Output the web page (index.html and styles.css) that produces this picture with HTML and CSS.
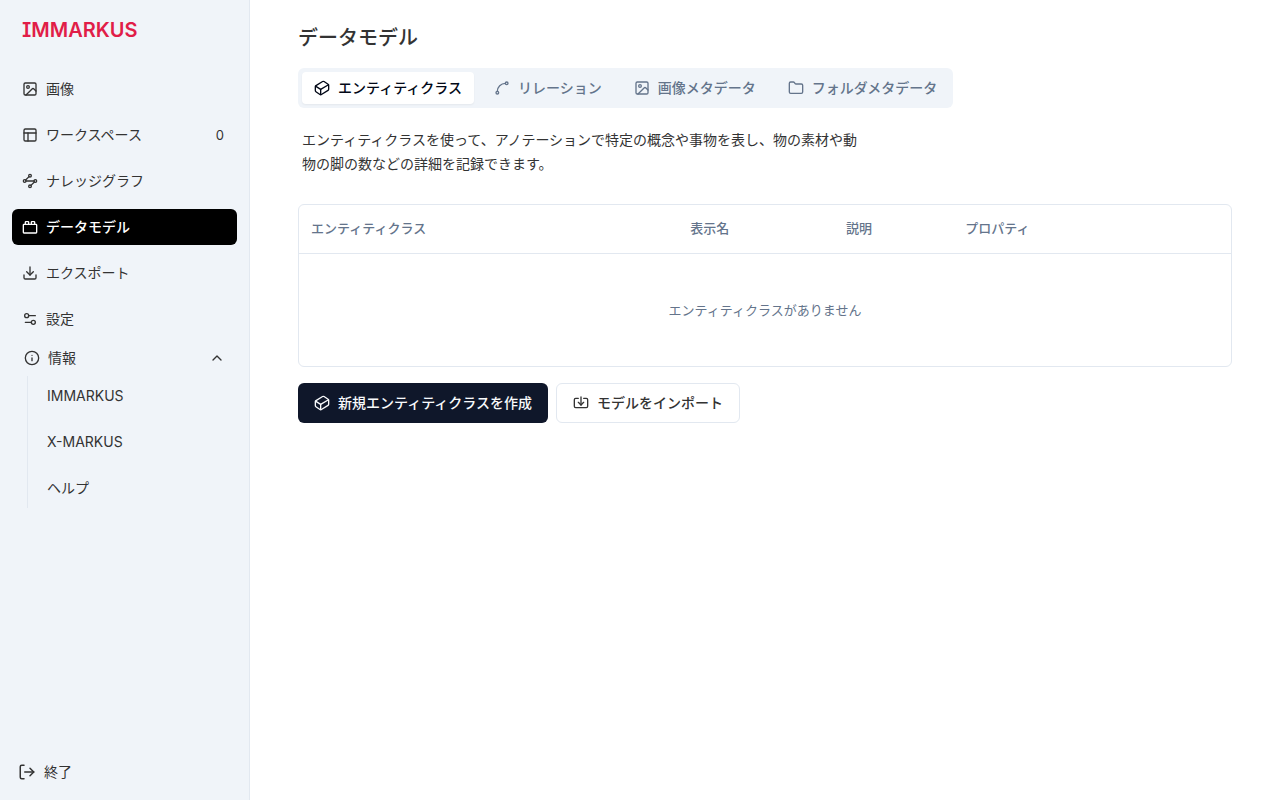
FILE: index.html
```html
<!DOCTYPE html>
<html lang="ja">
<head>
    <meta charset="UTF-8">
    <meta name="viewport" content="width=device-width, initial-scale=1.0">
    <title>IMMARKUS</title>
    <link rel="stylesheet" href="styles.css">
</head>
<body>
    <svg class="sprite" aria-hidden="true">
        <symbol id="image" viewBox="0 0 24 24">
            <rect width="18" height="18" x="3" y="3" rx="2" />
            <circle cx="9" cy="9" r="2" />
            <path d="m21 15-3.086-3.086a2 2 0 0 0-2.828 0L6 21" />
        </symbol>
        <symbol id="cuboid" viewBox="0 0 24 24">
            <path d="m21.12 6.4-6.05-4.06a2 2 0 0 0-2.17-.05L2.95 8.41a2 2 0 0 0-.95 1.7v5.82a2 2 0 0 0 .88 1.66l6.05 4.07a2 2 0 0 0 2.17.05l9.95-6.12a2 2 0 0 0 .95-1.7V8.06a2 2 0 0 0-.88-1.66Z" />
            <path d="M10 22v-8L2.25 9.15" />
            <path d="m10 14 11.77-6.87" />
        </symbol>
    </svg>

    <div class="page">
        <aside class="sidebar">
            <h1 class="logo">IMMARKUS</h1>

            <nav class="nav">
                <a class="nav-item" href="#images">
                    <svg class="icon"><use href="#image" /></svg>
                    画像
                </a>
                <a class="nav-item" href="#workspace">
                    <svg class="icon" viewBox="0 0 24 24">
                        <rect width="18" height="18" x="3" y="3" rx="2" />
                        <path d="M3 9h18" />
                        <path d="M9 21V9" />
                    </svg>
                    ワークスペース
                    <span class="count">0</span>
                </a>
                <a class="nav-item" href="#graph">
                    <svg class="icon" viewBox="0 0 24 24">
                        <circle cx="12" cy="4" r="2" />
                        <path d="m10.600 5.400-5.200 5.200" />
                        <circle cx="4" cy="12" r="2" />
                        <path d="M6 12h12" />
                        <circle cx="20" cy="12" r="2" />
                        <path d="m18.600 13.400-5.200 5.200" />
                        <circle cx="12" cy="20" r="2" />
                    </svg>
                    ナレッジグラフ
                </a>
                <a class="nav-item active" href="#model">
                    <svg class="icon" viewBox="0 0 24 24">
                        <rect width="20" height="13" x="2" y="8" rx="1" />
                        <path d="M10 8V5c0-.6-.4-1-1-1H6a1 1 0 0 0-1 1v3" />
                        <path d="M19 8V5c0-.6-.4-1-1-1h-3a1 1 0 0 0-1 1v3" />
                    </svg>
                    データモデル
                </a>
                <a class="nav-item" href="#export">
                    <svg class="icon" viewBox="0 0 24 24">
                        <path d="M21 15v4a2 2 0 0 1-2 2H5a2 2 0 0 1-2-2v-4" />
                        <path d="m7 10 5 5 5-5" />
                        <path d="M12 15V3" />
                    </svg>
                    エクスポート
                </a>
                <a class="nav-item" href="#settings">
                    <svg class="icon" viewBox="0 0 24 24">
                        <path d="M20 7h-9" />
                        <path d="M14 17H5" />
                        <circle cx="17" cy="17" r="3" />
                        <circle cx="7" cy="7" r="3" />
                    </svg>
                    設定
                </a>
            </nav>

            <button type="button" class="about-toggle" aria-expanded="true">
                <svg class="icon" viewBox="0 0 24 24">
                    <circle cx="12" cy="12" r="10" />
                    <path d="M12 16v-4" />
                    <path d="M12 8h.01" />
                </svg>
                情報
                <svg class="icon chevron" viewBox="0 0 24 24"><path d="m18 15-6-6-6 6" /></svg>
            </button>
            <div class="about">
                <a class="nav-item" href="#immarkus">IMMARKUS</a>
                <a class="nav-item" href="#xmarkus">X-MARKUS</a>
                <a class="nav-item" href="#help">ヘルプ</a>
            </div>

            <button type="button" class="exit">
                <svg class="icon exit-icon" viewBox="0 0 24 24">
                    <path d="M8 21H5a2 2 0 0 1-2-2V5a2 2 0 0 1 2-2h3" />
                    <path d="m16 17 5-5-5-5" />
                    <path d="M21 12H9" />
                </svg>
                終了
            </button>
        </aside>

        <main class="main">
            <h2 class="title">データモデル</h2>

            <div class="tabs" role="tablist">
                <button type="button" class="tab selected" role="tab" aria-selected="true">
                    <svg class="icon"><use href="#cuboid" /></svg>
                    エンティティクラス
                </button>
                <button type="button" class="tab" role="tab">
                    <svg class="icon" viewBox="0 0 24 24">
                        <circle cx="19" cy="5" r="2" />
                        <circle cx="5" cy="19" r="2" />
                        <path d="M5 17A12 12 0 0 1 17 5" />
                    </svg>
                    リレーション
                </button>
                <button type="button" class="tab" role="tab">
                    <svg class="icon"><use href="#image" /></svg>
                    画像メタデータ
                </button>
                <button type="button" class="tab" role="tab">
                    <svg class="icon" viewBox="0 0 24 24">
                        <path d="M20 20a2 2 0 0 0 2-2V8a2 2 0 0 0-2-2h-7.900a2 2 0 0 1-1.690-.900L9.600 3.900A2 2 0 0 0 7.930 3H4a2 2 0 0 0-2 2v13a2 2 0 0 0 2 2Z" />
                    </svg>
                    フォルダメタデータ
                </button>
            </div>

            <p class="intro">エンティティクラスを使って、アノテーションで特定の概念や事物を表し、物の素材や動物の脚の数などの詳細を記録できます。</p>

            <div class="table-box">
                <table class="table">
                    <thead>
                        <tr>
                            <th class="col-class">エンティティクラス</th>
                            <th class="col-name">表示名</th>
                            <th class="col-description">説明</th>
                            <th>プロパティ</th>
                        </tr>
                    </thead>
                    <tbody>
                        <tr>
                            <td class="empty" colspan="4">エンティティクラスがありません</td>
                        </tr>
                    </tbody>
                </table>
            </div>

            <div class="actions">
                <button type="button" class="btn primary">
                    <svg class="icon"><use href="#cuboid" /></svg>
                    新規エンティティクラスを作成
                </button>
                <button type="button" class="btn">
                    <svg class="icon" viewBox="0 0 24 24">
                        <path d="M12 3v12" />
                        <path d="m8 11 4 4 4-4" />
                        <path d="M8 5H4a2 2 0 0 0-2 2v10a2 2 0 0 0 2 2h16a2 2 0 0 0 2-2V7a2 2 0 0 0-2-2h-4" />
                    </svg>
                    モデルをインポート
                </button>
            </div>
        </main>
    </div>
</body>
</html>
```

FILE: styles.css
```css
* {
    box-sizing: border-box;
}
body {
    margin: 0;
    font-family: Inter, "Noto Sans CJK JP", sans-serif;
    font-size: 14px;
    line-height: 20px;
    color: #333;
    background-color: #fff;
}
button {
    font: inherit;
    color: inherit;
    background: none;
    border: none;
    cursor: pointer;
}
a {
    color: inherit;
    text-decoration: none;
}
.sprite {
    display: none;
}
.icon {
    width: 16px;
    height: 16px;
    flex: none;
    fill: none;
    stroke: currentColor;
    stroke-width: 2;
    stroke-linecap: round;
    stroke-linejoin: round;
}
.page {
    display: flex;
    min-height: 100vh;
}

/* sidebar */
.sidebar {
    display: flex;
    flex-direction: column;
    width: 250px;
    flex: none;
    padding: 16px 12px 10px;
    background-color: #f0f4f9;
    border-right: 1px solid #e2e8f0;
}
.logo {
    margin: 0 0 27px;
    padding: 0 10px;
    font-size: 20px;
    line-height: 28px;
    font-weight: 600;
    font-feature-settings: "cv08";
    color: #e11d48;
}
.nav {
    display: flex;
    flex-direction: column;
    gap: 10px;
}
.nav-item {
    display: flex;
    align-items: center;
    gap: 8px;
    height: 36px;
    padding: 0 10px;
    border-radius: 6px;
}
.active {
    background-color: #000;
    color: #fff;
    font-weight: 500;
}
.count {
    margin-left: auto;
    padding-right: 3px;
    font-size: 13px;
}
.about-toggle {
    display: flex;
    align-items: center;
    gap: 8px;
    height: 36px;
    margin-top: 3px;
    padding: 0 12px;
}
.chevron {
    margin-left: auto;
}
.about {
    display: flex;
    flex-direction: column;
    gap: 10px;
    margin-left: 15px;
    padding: 2px 0 2px 9px;
    border-left: 1px solid #e2e8f0;
}
.exit {
    display: flex;
    align-items: center;
    gap: 8px;
    height: 36px;
    margin-top: auto;
    padding: 0 6px;
}
.exit-icon {
    width: 18px;
    height: 18px;
}

/* data model */
.main {
    flex: 1;
    min-width: 0;
    padding: 24px 48px;
}
.title {
    margin: 0 0 16px;
    font-size: 20px;
    line-height: 28px;
    font-weight: 500;
}
.tabs {
    display: inline-flex;
    gap: 8px;
    padding: 4px;
    border-radius: 6px;
    background-color: #f0f4f9;
    color: #64748b;
}
.tab {
    display: flex;
    align-items: center;
    gap: 8px;
    height: 32px;
    padding: 0 12px;
    border-radius: 4px;
    font-weight: 500;
    white-space: nowrap;
}
.selected {
    background-color: #fff;
    color: #020817;
    box-shadow: 0 1px 2px rgba(0, 0, 0, 0.05);
}
.intro {
    max-width: 576px;
    margin: 20px 0 28px;
    padding: 0 4px;
    line-height: 24px;
}
.table-box {
    border: 1px solid #e2e8f0;
    border-radius: 6px;
}
.table {
    width: 100%;
    border-collapse: collapse;
    table-layout: fixed;
    font-size: 13px;
    color: #64748b;
}
.table th {
    height: 48px;
    padding: 0 12px 2px;
    border-bottom: 1px solid #e2e8f0;
    font-weight: 500;
    text-align: left;
}
.col-class {
    width: 40.7%;
}
.col-name {
    width: 16.7%;
}
.col-description {
    width: 12.8%;
}
.table .empty {
    height: 113px;
    padding: 0 12px;
    text-align: center;
}
.actions {
    display: flex;
    gap: 8px;
    margin-top: 16px;
}
.btn {
    display: flex;
    align-items: center;
    gap: 8px;
    height: 40px;
    padding: 0 16px;
    border: 1px solid #e2e8f0;
    border-radius: 6px;
    background-color: #fff;
    font-weight: 500;
}
.primary {
    border: none;
    background-color: #0f172a;
    color: #f8fafc;
}
```
